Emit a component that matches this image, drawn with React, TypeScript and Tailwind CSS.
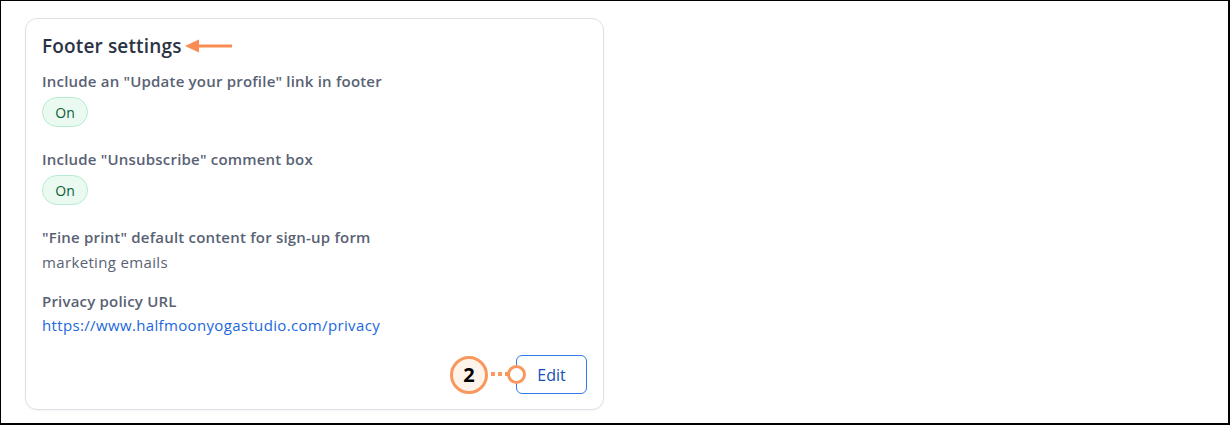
import React from "react";

function Pill() {
  return (
    <div className="mt-[6px] flex h-[30px] w-[46px] items-center justify-center rounded-full border border-[#b5ecd0] bg-[#eafaf1] text-[14px] font-medium text-[#0d5c35]">
      On
    </div>
  );
}

export default function App() {
  return (
    <div
      className="relative h-[425px] w-[1230px] border-t border-l border-r-2 border-b-2 border-black bg-white pl-[24px] pt-[17px]"
      style={{ fontFamily: "'Open Sans', sans-serif" }}
    >
      <div className="flex h-[392px] w-[579px] flex-col rounded-[12px] border border-[#dde0e6] bg-white px-[16px] pt-[15px] shadow-[0_1px_2px_rgba(0,0,0,0.04)]">
        <div className="flex items-center">
          <h2 className="text-[19px] font-semibold leading-[24px] tracking-[0.15px] text-[#2b3244]">Footer settings</h2>
          <svg width="50" height="14" viewBox="0 0 50 14" className="ml-[2px]">
            <line x1="12" y1="7" x2="48" y2="7" stroke="#f88c52" strokeWidth="3" />
            <polygon points="1,7 15,0.5 15,13.5" fill="#f88c52" />
          </svg>
        </div>

        <div className="mt-[13px] text-[15px] font-semibold leading-[20px] tracking-[0.2px] text-[#596274]">
          Include an "Update your profile" link in footer
        </div>
        <Pill />

        <div className="mt-[22px] text-[15px] font-semibold leading-[20px] tracking-[0.2px] text-[#596274]">
          Include "Unsubscribe" comment box
        </div>
        <Pill />

        <div className="mt-[22px] text-[15px] font-semibold leading-[20px] tracking-[0.2px] text-[#596274]">
          "Fine print" default content for sign-up form
        </div>
        <div className="mt-[5px] text-[15px] leading-[20px] tracking-[0.35px] text-[#596274]">marketing emails</div>

        <div className="mt-[19px] text-[15px] font-semibold leading-[20px] tracking-[0.2px] text-[#596274]">Privacy policy URL</div>
        <div className="mt-[4px] text-[15px] leading-[20px] tracking-[0.35px] text-[#1b67dc]">
          https://www.halfmoonyogastudio.com/privacy
        </div>

        <div className="mt-[20px] flex justify-end">
          <div className="relative">
            <button className="flex h-[39px] w-[71px] items-center justify-center rounded-[6px] border border-[#2f7be8] bg-white text-[16px] font-medium text-[#1450b8]">
              Edit
            </button>
            <div className="absolute left-[-66px] top-[0.5px] flex h-[38px] w-[38px] items-center justify-center rounded-full border-[3px] border-[#f8985e] bg-[#fff4ea] text-[20px] font-bold text-black">
              2
            </div>
            <div className="absolute left-[-25px] top-[17px] flex gap-[3px]">
              <span className="h-[4px] w-[4px] bg-[#f8985e]" />
              <span className="h-[4px] w-[4px] bg-[#f8985e]" />
              <span className="h-[4px] w-[4px] bg-[#f8985e]" />
            </div>
            <div className="absolute left-[-9px] top-[10px] h-[19px] w-[19px] rounded-full border-[3px] border-[#f8985e] bg-white" />
          </div>
        </div>
      </div>
    </div>
  );
}
